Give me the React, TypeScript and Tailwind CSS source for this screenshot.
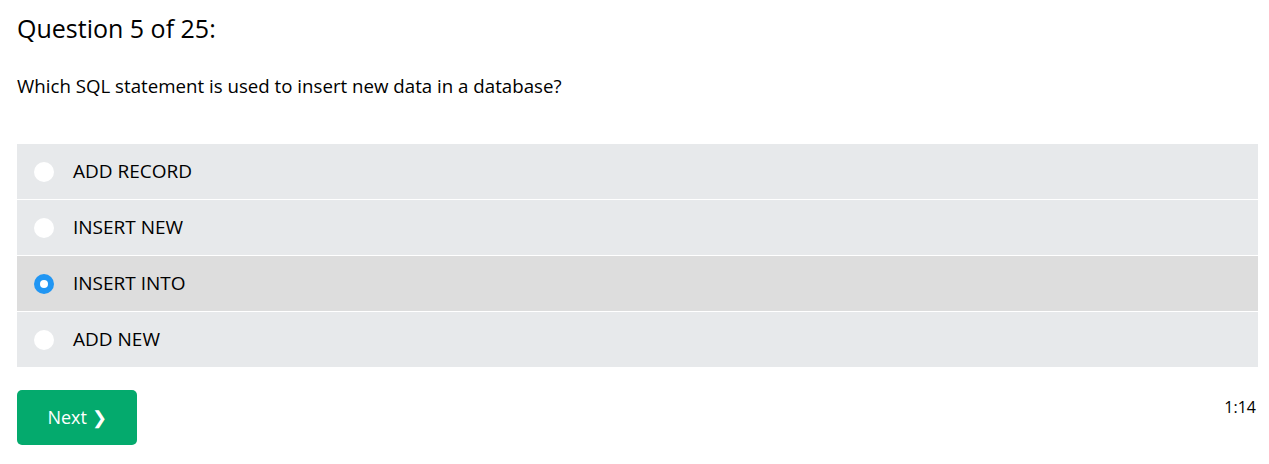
import { useState } from 'react';

const options = ['ADD RECORD', 'INSERT NEW', 'INSERT INTO', 'ADD NEW'];

export default function App() {
  const [picked, setPicked] = useState(2);

  return (
    <div className="min-h-screen bg-white pl-[17px] pr-[11px] pt-[11px] text-black" style={{ fontFamily: '"Open Sans", "Noto Sans", sans-serif' }}>
      <h2 className="text-[25px] leading-[34px]">Question 5 of 25:</h2>
      <p className="mt-[26px] text-[18.7px] leading-[30px]">Which SQL statement is used to insert new data in a database?</p>

      <div className="mt-[43px] flex flex-col gap-px">
        {options.map((label, i) => (
          <label
            key={label}
            onClick={() => setPicked(i)}
            className={`flex h-[55px] cursor-pointer items-center pl-[17px] text-[19px] ${
              picked === i ? 'bg-[#dddddd]' : 'bg-[#e7e9eb]'
            }`}
          >
            {picked === i ? (
              <span className="flex h-5 w-5 items-center justify-center rounded-full bg-[#2196f3]">
                <span className="h-2 w-2 rounded-full bg-white" />
              </span>
            ) : (
              <span className="h-5 w-5 rounded-full bg-white" />
            )}
            <span className="ml-[19px]">{label}</span>
          </label>
        ))}
      </div>

      <div className="mt-[23px] flex items-start justify-between">
        <button className="h-[55px] w-[120px] rounded-[5px] bg-[#04aa6d] text-[18px] text-white">
          Next ❯
        </button>
        <span className="mt-[5px] pr-[2px] text-[16px]">1:14</span>
      </div>
    </div>
  );
}
